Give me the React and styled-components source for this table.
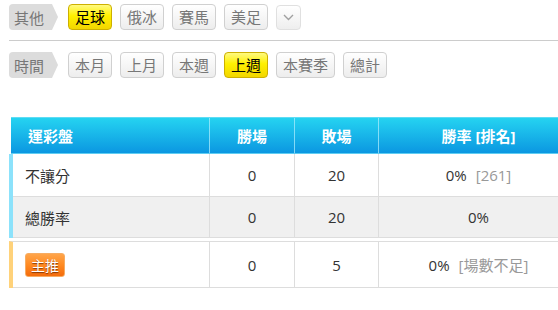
import React from 'react';
import styled, { createGlobalStyle } from 'styled-components';

const FONT = '"Open Sans", "Noto Sans CJK TC", sans-serif';

const GlobalStyle = createGlobalStyle`
  html, body {
    margin: 0;
    padding: 0;
    background: #fff;
    overflow: hidden;
  }
  body {
    font-family: ${FONT};
    color: #333;
  }
`;

const Page = styled.div`
  padding: 4px 0 0 9px;
  width: 600px;
`;

const FilterRow = styled.div`
  display: flex;
  align-items: center;
  gap: 8px;
  height: 26px;
`;

const Tag = styled.span`
  position: relative;
  display: flex;
  align-items: center;
  box-sizing: border-box;
  height: 26px;
  width: 43px;
  padding-left: 5px;
  margin-right: 8px;
  background: #dcdcdc;
  border-radius: 4px 0 0 4px;
  color: #777;
  font-size: 15px;

  &::after {
    content: '';
    position: absolute;
    left: 100%;
    top: 0;
    border-style: solid;
    border-width: 13px 0 13px 6px;
    border-color: transparent transparent transparent #dcdcdc;
  }
`;

const Chip = styled.button`
  display: flex;
  align-items: center;
  justify-content: center;
  box-sizing: border-box;
  height: 26px;
  padding: 0 6px;
  margin: 0;
  border: 1px solid ${(p) => (p.$active ? '#cdb000' : '#d0d0d0')};
  border-radius: 4px;
  background: ${(p) =>
    p.$active
      ? 'linear-gradient(#fffa80, #fff000 45%, #f2d600)'
      : 'linear-gradient(#ffffff, #ededed)'};
  color: ${(p) => (p.$active ? '#000' : '#777')};
  font-family: ${FONT};
  font-size: 15px;
  line-height: 24px;
  cursor: pointer;
`;

const MoreChip = styled(Chip)`
  width: 25px;
  height: 25px;
  padding: 0;
  border-color: #e0e0e0;
  background: linear-gradient(#ffffff, #eeeeee);
`;

const Divider = styled.div`
  height: 1px;
  margin: 10px 0 11px;
  background: #cccccc;
`;

const Table = styled.div`
  margin-top: 39px;
  width: 580px;
`;

const HeadRow = styled.div`
  display: grid;
  grid-template-columns: 199px 85px 84px 200px;
  margin-left: 2px;
  height: 37px;
  box-sizing: border-box;
  border-top: 1px solid #5fdcf4;
  border-bottom: 1px solid #5fcdf2;
  background: linear-gradient(#25d3f1, #0b97e1);
`;

const HeadCell = styled.div`
  display: flex;
  align-items: center;
  justify-content: ${(p) => (p.$left ? 'flex-start' : 'center')};
  padding-left: ${(p) => (p.$left ? '17px' : '0')};
  border-right: 1px solid rgba(170, 235, 252, 0.75);
  color: #fff;
  font-weight: bold;
  font-size: 15px;
`;

const Group = styled.div`
  border-left: 4px solid ${(p) => p.$accent};
  border-top: ${(p) => (p.$gap ? '1px solid #dddddd' : 'none')};
  margin-top: ${(p) => (p.$gap ? '3px' : '0')};
`;

const Row = styled.div`
  display: grid;
  grid-template-columns: 197px 85px 84px 200px;
  box-sizing: border-box;
  height: ${(p) => p.$h}px;
  border-bottom: 1px solid #dddddd;
  background: ${(p) => (p.$shade ? '#f0f0f0' : '#ffffff')};
`;

const Cell = styled.div`
  display: flex;
  align-items: center;
  justify-content: ${(p) => (p.$left ? 'flex-start' : 'center')};
  padding-left: ${(p) => (p.$left ? '12px' : '0')};
  border-right: 1px solid #dddddd;
  font-size: 15px;
  color: #333;
`;

const Note = styled.span`
  margin-left: 9px;
  color: #999;
`;

const Badge = styled.span`
  display: inline-flex;
  align-items: center;
  box-sizing: border-box;
  height: 24px;
  padding: 0 5px;
  border: 1px solid #f7ac62;
  border-radius: 3px;
  background: linear-gradient(#ffa54a, #ff8a22 50%, #f46c0c);
  color: #fff;
  font-size: 14px;
  text-shadow: 0 1px 1px rgba(110, 40, 0, 0.85);
`;

const Chevron = () => (
  <svg width="11" height="7" viewBox="0 0 11 7" fill="none">
    <path d="M1 1l4.5 4.5L10 1" stroke="#a0a0a0" strokeWidth="1.4" />
  </svg>
);

const sports = [
  { label: '足球', active: true },
  { label: '俄冰' },
  { label: '賽馬' },
  { label: '美足' },
];

const periods = [
  { label: '本月' },
  { label: '上月' },
  { label: '本週' },
  { label: '上週', active: true },
  { label: '本賽季' },
  { label: '總計' },
];

const StatRow = ({ name, win, lose, rate, note, shade, h }) => (
  <Row $shade={shade} $h={h}>
    <Cell $left>{name}</Cell>
    <Cell>{win}</Cell>
    <Cell>{lose}</Cell>
    <Cell>
      {rate}
      {note && <Note>{note}</Note>}
    </Cell>
  </Row>
);

export default function App() {
  return (
    <>
      <GlobalStyle />
      <Page>
        <FilterRow>
          <Tag>其他</Tag>
          {sports.map((s) => (
            <Chip key={s.label} $active={s.active}>
              {s.label}
            </Chip>
          ))}
          <MoreChip>
            <Chevron />
          </MoreChip>
        </FilterRow>
        <Divider />
        <FilterRow>
          <Tag>時間</Tag>
          {periods.map((s) => (
            <Chip key={s.label} $active={s.active}>
              {s.label}
            </Chip>
          ))}
        </FilterRow>

        <Table>
          <HeadRow>
            <HeadCell $left>運彩盤</HeadCell>
            <HeadCell>勝場</HeadCell>
            <HeadCell>敗場</HeadCell>
            <HeadCell>勝率 [排名]</HeadCell>
          </HeadRow>
          <Group $accent="#8ce2fb">
            <StatRow name="不讓分" win="0" lose="20" rate="0%" note="[261]" h={43} />
            <StatRow name="總勝率" win="0" lose="20" rate="0%" shade h={41} />
          </Group>
          <Group $accent="#ffd27a" $gap>
            <StatRow
              name={<Badge>主推</Badge>}
              win="0"
              lose="5"
              rate="0%"
              note="[場數不足]"
              h={46}
            />
          </Group>
        </Table>
      </Page>
    </>
  );
}
